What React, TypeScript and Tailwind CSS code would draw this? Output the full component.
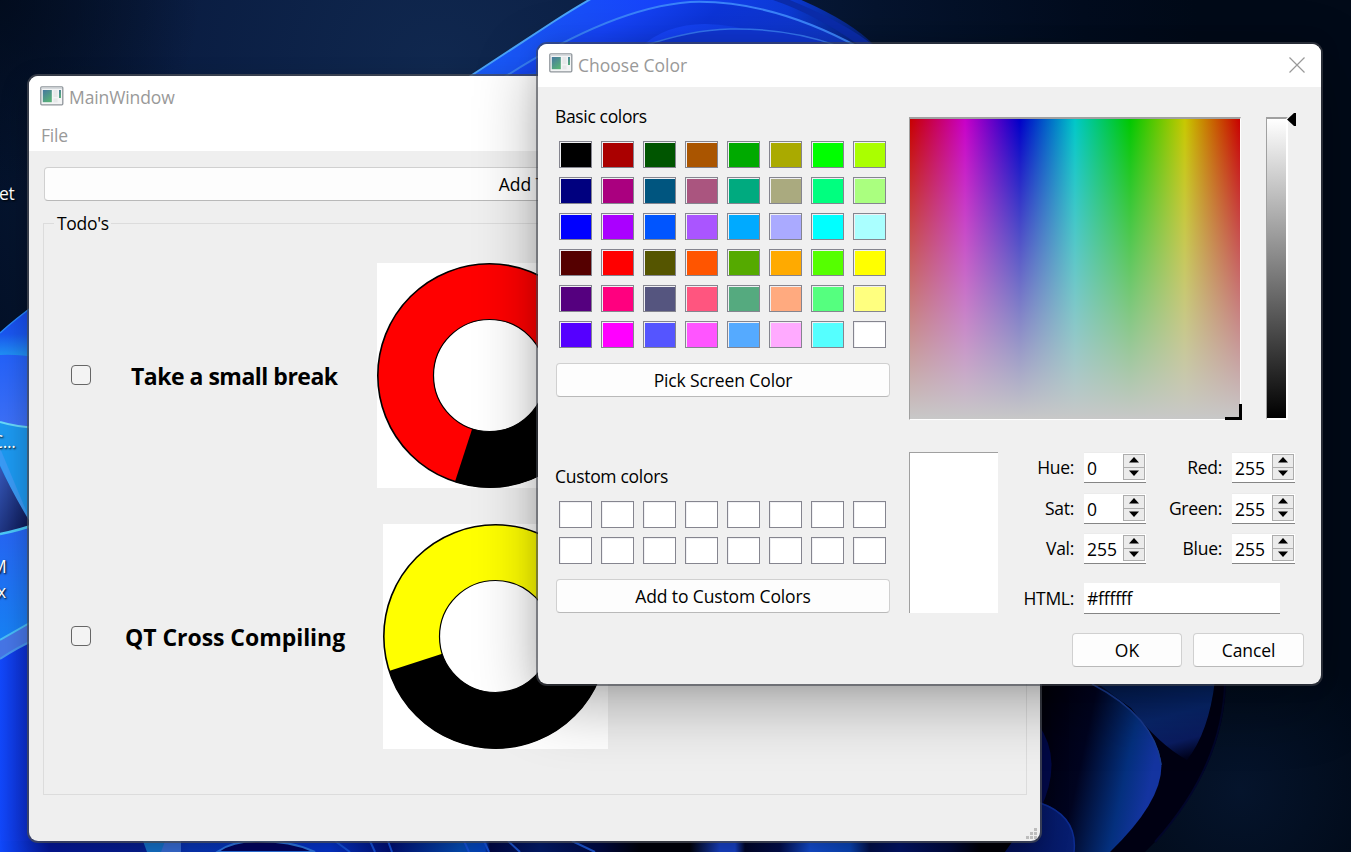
import type { ReactNode } from 'react';

const basicColors: string[][] = [
  ['#000000', '#aa0000', '#005500', '#aa5500', '#00aa00', '#aaaa00', '#00ff00', '#aaff00'],
  ['#00007f', '#aa007f', '#00557f', '#aa557f', '#00aa7f', '#aaaa7f', '#00ff7f', '#aaff7f'],
  ['#0000ff', '#aa00ff', '#0055ff', '#aa55ff', '#00aaff', '#aaaaff', '#00ffff', '#aaffff'],
  ['#550000', '#ff0000', '#555500', '#ff5500', '#55aa00', '#ffaa00', '#55ff00', '#ffff00'],
  ['#55007f', '#ff007f', '#55557f', '#ff557f', '#55aa7f', '#ffaa7f', '#55ff7f', '#ffff7f'],
  ['#5500ff', '#ff00ff', '#5555ff', '#ff55ff', '#55aaff', '#ffaaff', '#55ffff', '#ffffff'],
];
const customColors: string[][] = [Array(8).fill('#ffffff'), Array(8).fill('#ffffff')];

function Wallpaper() {
  return (
    <svg className="absolute inset-0" width="1351" height="852" viewBox="0 0 1351 852">
      <defs>
        <radialGradient id="sky" gradientUnits="userSpaceOnUse" cx="440" cy="70" r="760">
          <stop offset="0" stopColor="#10284f" />
          <stop offset="0.35" stopColor="#0a1d42" />
          <stop offset="0.58" stopColor="#05142e" />
          <stop offset="0.85" stopColor="#020c1e" />
          <stop offset="1" stopColor="#010a18" />
        </radialGradient>
        <radialGradient id="corner" gradientUnits="userSpaceOnUse" cx="0" cy="0" r="200">
          <stop offset="0" stopColor="#010a1a" stopOpacity="0.8" />
          <stop offset="1" stopColor="#010a1a" stopOpacity="0" />
        </radialGradient>
        <radialGradient id="glow" gradientUnits="userSpaceOnUse" cx="1240" cy="790" r="150">
          <stop offset="0" stopColor="#05142c" />
          <stop offset="1" stopColor="#05142c" stopOpacity="0" />
        </radialGradient>
        <linearGradient id="arc" x1="0" y1="0" x2="1" y2="0">
          <stop offset="0" stopColor="#1a60f8" />
          <stop offset="0.5" stopColor="#1744fb" />
          <stop offset="0.8" stopColor="#0c3ad6" />
          <stop offset="1" stopColor="#06206c" />
        </linearGradient>
        <linearGradient id="arc2" x1="0" y1="0" x2="1" y2="0.2">
          <stop offset="0" stopColor="#1a58fa" />
          <stop offset="0.35" stopColor="#1644fa" />
          <stop offset="0.6" stopColor="#0c34d8" />
          <stop offset="1" stopColor="#1038c8" />
        </linearGradient>
        <linearGradient id="left1" x1="0" y1="0" x2="0" y2="1">
          <stop offset="0" stopColor="#1745ec" />
          <stop offset="0.06" stopColor="#1a56ee" />
          <stop offset="0.1" stopColor="#2092f4" />
          <stop offset="1" stopColor="#2092f4" />
        </linearGradient>
        <linearGradient id="left2" x1="0" y1="0" x2="0" y2="1">
          <stop offset="0" stopColor="#2461f8" />
          <stop offset="1" stopColor="#3e70f5" />
        </linearGradient>
        <linearGradient id="left3" x1="0" y1="0" x2="1" y2="1">
          <stop offset="0" stopColor="#3658b8" />
          <stop offset="1" stopColor="#071048" />
        </linearGradient>
        <linearGradient id="left4" x1="0" y1="0" x2="0" y2="1">
          <stop offset="0" stopColor="#2763f2" />
          <stop offset="1" stopColor="#1781f4" />
        </linearGradient>
        <linearGradient id="left5" x1="0" y1="0" x2="1" y2="0">
          <stop offset="0" stopColor="#1248fa" />
          <stop offset="1" stopColor="#0a22b8" />
        </linearGradient>
        <linearGradient id="petalA" x1="0" y1="0" x2="1" y2="0.3">
          <stop offset="0" stopColor="#000008" />
          <stop offset="0.45" stopColor="#010420" />
          <stop offset="0.8" stopColor="#04307e" />
          <stop offset="1" stopColor="#1434a0" />
        </linearGradient>
        <linearGradient id="petalB" x1="0.3" y1="0" x2="0.7" y2="1">
          <stop offset="0" stopColor="#031c50" />
          <stop offset="0.5" stopColor="#08266c" />
          <stop offset="0.8" stopColor="#0a1c60" />
          <stop offset="1" stopColor="#01031c" />
        </linearGradient>
        <linearGradient id="petalC" x1="0" y1="0" x2="1" y2="0">
          <stop offset="0" stopColor="#02105a" />
          <stop offset="1" stopColor="#071e70" />
        </linearGradient>
        <linearGradient id="floor" gradientUnits="userSpaceOnUse" x1="0" y1="0" x2="1000" y2="0">
          <stop offset="0" stopColor="#1048fa" />
          <stop offset="0.05" stopColor="#0518a0" />
          <stop offset="0.14" stopColor="#06209a" />
          <stop offset="0.19" stopColor="#0838c0" />
          <stop offset="0.33" stopColor="#0536d8" />
          <stop offset="0.39" stopColor="#01107a" />
          <stop offset="0.46" stopColor="#0450c0" />
          <stop offset="0.485" stopColor="#0448d0" />
          <stop offset="0.49" stopColor="#01084a" />
          <stop offset="0.54" stopColor="#021c70" />
          <stop offset="0.6" stopColor="#010a48" />
          <stop offset="0.64" stopColor="#00020c" />
          <stop offset="0.69" stopColor="#00020c" />
          <stop offset="0.72" stopColor="#1844d0" />
          <stop offset="0.735" stopColor="#1844d0" />
          <stop offset="0.745" stopColor="#01062c" />
          <stop offset="0.78" stopColor="#020e50" />
          <stop offset="0.81" stopColor="#1450dc" />
          <stop offset="0.85" stopColor="#0a48c0" />
          <stop offset="0.87" stopColor="#02104c" />
          <stop offset="0.9" stopColor="#02146c" />
          <stop offset="0.95" stopColor="#010a40" />
          <stop offset="0.98" stopColor="#000008" />
          <stop offset="1" stopColor="#000008" />
        </linearGradient>
      </defs>
      <rect width="1351" height="852" fill="url(#sky)" />
      <rect width="200" height="200" fill="url(#corner)" />
      <rect x="1040" y="640" width="311" height="212" fill="url(#glow)" />
      <path d="M440 96 L553 22 Q578 6 596 -4 H792 Q850 20 875 46 V96Z" fill="url(#arc)" />
      <path d="M440 96 L553 22 Q578 6 596 -4" fill="none" stroke="#4aa4fa" strokeWidth="2" />
      <path d="M500 80 Q610 8 686 2 Q770 -4 860 48 H800 Q690 0 640 48Z" fill="url(#arc2)" />
      <path d="M500 80 Q610 8 690 2 Q770 -1 860 48" fill="none" stroke="#3a83fa" strokeWidth="2" />
      <path d="M644 46 Q690 30 730 29 Q790 28 838 46Z" fill="#1036d4" stroke="#3475f0" strokeWidth="1.5" />
      <path d="M780 -4 Q845 22 874 46 H860 Q810 10 760 -4Z" fill="#0b2cab" />
      <path d="M0 333 Q14 320 40 301 V852 H0Z" fill="url(#left1)" />
      <path d="M0 333 Q14 320 40 301" fill="none" stroke="#2888fa" strokeWidth="1.5" />
      <path d="M0 355 Q18 354 40 358 V430 H0Z" fill="url(#left2)" />
      <path d="M0 422 Q16 427 40 428 V545 H0Z" fill="#1c98ef" />
      <path d="M0 422 Q16 427 40 428" fill="none" stroke="#68d8f8" strokeWidth="2" />
      <path d="M0 448 L30 520 V530 L0 465Z" fill="#3a9af4" />
      <path d="M0 466 Q12 492 30 522 V530 L0 538Z" fill="url(#left3)" />
      <path d="M0 534 Q17 531 40 523 V640 H0Z" fill="url(#left4)" />
      <path d="M0 534 Q17 531 40 523" fill="none" stroke="#4bc7f6" strokeWidth="2.5" />
      <path d="M0 640 L40 617 V852 H0Z" fill="#4675e5" />
      <path d="M0 640 L40 617" stroke="#48bdf5" strokeWidth="2" />
      <path d="M0 659 Q16 648 40 637 V852 H0Z" fill="url(#left5)" />
      <path d="M0 659 Q16 648 40 637" fill="none" stroke="#4795ed" strokeWidth="2" />
      <path d="M1030 680 H1226 Q1225 765 1155 842 L1145 852 H1030Z" fill="#000012" />
      <path d="M1225 680 Q1224 765 1155 842" fill="none" stroke="#02062a" strokeWidth="2" />
      <path d="M1092 680 H1215 Q1209 732 1187 760 Q1158 744 1131 708Z" fill="url(#petalB)" />
      <path d="M1038 680 H1092 Q1152 718 1161 760 Q1166 798 1110 852 H1038Z" fill="url(#petalA)" />
      <path d="M1092 684 Q1155 717 1161 765" fill="none" stroke="#183b91" strokeWidth="1.5" />
      <path d="M1038 724 Q1064 760 1040 810Z" fill="#02094a" />
      <rect y="841" width="1040" height="11" fill="url(#floor)" />
      <path d="M1005 852 L1040 802 Q1078 815 1074 852Z" fill="url(#petalC)" />
      <path d="M1040 803 Q1078 816 1074 852" fill="none" stroke="#0c2b8e" strokeWidth="1.5" />
      <path d="M143 841 H181 V852 H147Z" fill="#1577d4" />
      <path d="M165 841 H181 V852 H161Z" fill="#3a72e0" />
      <path d="M217 852 Q232 841 258 841 Q292 841 315 852Z" fill="#020466" stroke="#2f7cf0" strokeWidth="2" />
      <path d="M335 841 L350 852 M370 841 L375 852 M388 841 L392 852 M464 841 L469 852 M484 841 L489 852" stroke="#1756e8" strokeWidth="2" />
      <path d="M508 841 L520 852 M572 841 L595 852" stroke="#1f5ce0" strokeWidth="2" />
    </svg>
  );
}

function AppIcon() {
  return (
    <svg width="24" height="20" viewBox="0 0 24 20" className="mb-[3px] shrink-0">
      <defs>
        <linearGradient id="pane" x1="0" y1="0" x2="0.6" y2="1">
          <stop offset="0" stopColor="#4777a0" />
          <stop offset="1" stopColor="#57b078" />
        </linearGradient>
      </defs>
      <rect x="0.8" y="0.8" width="22" height="18" rx="1" fill="#f3f4f5" stroke="#8f959b" strokeWidth="1.3" />
      <path d="M1.5 2.2H22" stroke="#d3d7db" strokeWidth="1.4" />
      <rect x="2.8" y="4" width="9" height="12.2" fill="url(#pane)" />
      <rect x="13.4" y="4" width="4.2" height="7" fill="#e6e8e9" />
      <rect x="13.4" y="12.4" width="4.2" height="4" fill="#e6e8e9" />
      <rect x="19" y="4" width="2" height="8" fill="url(#pane)" />
    </svg>
  );
}

function PushButton({ className, children }: { className: string; children: ReactNode }) {
  return (
    <button
      className={`flex h-[34px] items-center justify-center rounded-[4px] border border-[#d0d0d0] border-b-[#b9b9b9] bg-[#fdfdfd] pb-px text-black ${className}`}
    >
      {children}
    </button>
  );
}

function Donut({ color, end }: { color: string; end: number }) {
  const a = (end * Math.PI) / 180;
  const x = 112.5 + 112 * Math.sin(a);
  const y = 112.5 - 112 * Math.cos(a);
  return (
    <svg width="225" height="225" viewBox="0 0 225 225" className="block shrink-0 bg-white">
      <circle cx="112.5" cy="112.5" r="111.7" fill={color} stroke="#000" strokeWidth="1.6" />
      <path d={`M112.5 112.5 L224.5 112.5 A112 112 0 0 1 ${x} ${y}Z`} fill="#000" />
      <circle cx="112.5" cy="112.5" r="56" fill="#fff" stroke="#000" strokeWidth="1.2" />
    </svg>
  );
}

function TodoRow({ label, labelClass, color, end }: { label: string; labelClass: string; color: string; end: number }) {
  return (
    <div className="flex h-[225px] items-center">
      <span className="mb-px ml-[27px] size-5 shrink-0 rounded-[4px] border border-[#666] bg-[#f3f3f3]" />
      <span className={`shrink-0 whitespace-nowrap text-[23px] font-bold text-black ${labelClass}`}>{label}</span>
      <Donut color={color} end={end} />
    </div>
  );
}

function MainWindow() {
  return (
    <section className="absolute left-[29px] top-[76px] flex h-[765px] w-[1011px] flex-col rounded-[9px] bg-[#efefef] shadow-[0_0_0_2px_rgba(72,76,86,0.75),0_10px_28px_rgba(0,0,0,0.3)]">
      <header className="flex h-[42px] items-center rounded-t-[9px] bg-white pl-[11px] text-[#999]">
        <AppIcon />
        <span className="ml-[5px] tracking-[-0.1px]">MainWindow</span>
      </header>
      <nav className="flex h-[33px] items-center bg-white pl-3 tracking-[-0.2px] text-[#999]">File</nav>
      <div className="pl-[15px] pr-[13px] pt-4">
        <PushButton className="w-full pl-[5px]">Add Todo</PushButton>
      </div>
      <fieldset className="ml-[14px] mr-[13px] mt-[9px] h-[585px] border border-[#dcdcdc]">
        <legend className="ml-[10px] h-[27px] pl-[3px] pr-0.5 leading-[27px] tracking-[-0.3px] text-black">Todo's</legend>
        <div className="flex flex-col gap-9 pt-[26px]">
          <TodoRow label="Take a small break" labelClass="ml-10 w-[246px] tracking-[-0.5px]" color="#ff0000" end={198} />
          <TodoRow label="QT Cross Compiling" labelClass="ml-[34px] w-[258px] tracking-[-0.05px]" color="#ffff00" end={252} />
        </div>
      </fieldset>
      <svg width="12" height="12" viewBox="0 0 12 12" className="ml-auto mr-0.5 mt-auto mb-px" fill="#bdbdbd">
        <path d="M8 0h3v3h-3zM4 4h3v3h-3zM8 4h3v3h-3zM0 8h3v3h-3zM4 8h3v3h-3zM8 8h3v3h-3z" />
      </svg>
    </section>
  );
}

function SwatchGrid({ rows }: { rows: string[][] }) {
  return (
    <div className="ml-1 grid w-[327px] grid-cols-8 gap-[9px]">
      {rows.flat().map((c, i) => (
        <div key={i} className="h-[27px] w-[33px] border border-[#85858f] bg-[#f0f0f3] pl-px pt-px">
          <div className="h-full w-full" style={{ backgroundColor: c }} />
        </div>
      ))}
    </div>
  );
}

function SpinBox({ value, wide }: { value: string; wide?: boolean }) {
  return (
    <div
      className={`ml-[10px] flex h-[31px] justify-between border-b border-t border-b-[#858585] border-t-[#ebebeb] bg-white pl-[3px] pr-px pt-px text-left ${wide ? 'w-[63px]' : 'w-[62px]'}`}
    >
      <span className="leading-[29px]">{value}</span>
      <svg width="22" height="26" viewBox="0 0 22 26" className="shrink-0">
        <rect x="0.5" y="0.5" width="21" height="25" fill="#ebebeb" stroke="#adadad" />
        <path d="M0 13.5H22" stroke="#adadad" />
        <path d="M6 8.500 L11 3 L16 8.500Z" fill="#000" />
        <path d="M6 16.500 H16 L11 22Z" fill="#000" />
      </svg>
    </div>
  );
}

function FieldLabel({ children }: { children: ReactNode }) {
  return <label className="whitespace-nowrap text-right leading-[31px] tracking-[-0.3px]">{children}</label>;
}

function ColorField() {
  return (
    <div className="relative h-[303px] w-[332px] border-b border-l border-r border-t-2 border-b-white border-l-[#a0a0a0] border-r-white border-t-[#a0a0a0]">
      <div className="h-full w-full bg-[linear-gradient(to_bottom,rgba(200,200,200,0),rgb(200,200,200)),linear-gradient(to_right,#c80000,#c800c8_16.7%,#0000c8_33.3%,#00c8c8_50%,#00c800_66.7%,#c8c800_83.3%,#c80000)]" />
      <div className="absolute -bottom-px -right-0.5 h-4 w-[17px] border-b-[3px] border-r-[3px] border-black" />
    </div>
  );
}

function ColorDialog() {
  return (
    <section className="absolute left-[538px] top-[44px] flex h-[640px] w-[783px] flex-col rounded-[9px] bg-[#f0f0f0] text-black shadow-[0_0_0_2px_rgba(66,70,78,0.6),0_20px_64px_rgba(0,0,0,0.32),0_0_22px_rgba(0,0,0,0.1)]">
      <header className="flex h-[43px] items-center rounded-t-[9px] bg-white pb-0.5 pl-[11px] pr-4 text-[#999]">
        <AppIcon />
        <span className="ml-[5px] pt-px">Choose Color</span>
        <svg width="16" height="16" viewBox="0 0 16 16" className="ml-auto" stroke="#999" strokeWidth="1.2">
          <path d="M0.500 0.500 L15.500 15.500 M15.500 0.500 L0.500 15.500" />
        </svg>
      </header>
      <div className="flex flex-1">
        <div className="ml-[17px] flex w-[336px] flex-col pt-4">
          <h2 className="h-[38px] leading-[26px] tracking-[-0.35px]">Basic colors</h2>
          <SwatchGrid rows={basicColors} />
          <PushButton className="ml-px mt-[15px] w-[334px] tracking-[-0.12px]">Pick Screen Color</PushButton>
          <h2 className="mt-[66px] h-[38px] leading-[26px] tracking-[-0.3px]">Custom colors</h2>
          <SwatchGrid rows={customColors} />
          <PushButton className="ml-px mt-[15px] w-[334px] tracking-[-0.12px]">Add to Custom Colors</PushButton>
        </div>
        <div className="ml-[18px] flex w-[395px] flex-col pt-[30px]">
          <div className="flex">
            <ColorField />
            <div className="relative ml-[25px] flex h-[303px] w-[22px] flex-col border-b-2 border-l border-r-2 border-t-2 border-b-white border-l-[#a0a0a0] border-r-white border-t-[#a0a0a0]">
              <div className="flex-1 bg-[linear-gradient(to_bottom,#fff,#000)]" />
              <svg width="9" height="13" viewBox="0 0 9 13" className="absolute -right-[10px] -top-[6px]">
                <path d="M9 0 V13 H7 L0 6.500 L7 0Z" fill="#000" />
              </svg>
            </div>
          </div>
          <div className="mt-8 flex">
            <div className="h-[161px] w-[89px] shrink-0 border-l border-t border-[#a0a0a0] bg-white" />
            <div className="flex flex-col">
              <div className="grid grid-cols-[76px_72px_76px_73px] gap-y-[9.500px]">
                <FieldLabel>Hue:</FieldLabel>
                <SpinBox value="0" />
                <FieldLabel>Red:</FieldLabel>
                <SpinBox value="255" wide />
                <FieldLabel>Sat:</FieldLabel>
                <SpinBox value="0" />
                <FieldLabel>Green:</FieldLabel>
                <SpinBox value="255" wide />
                <FieldLabel>Val:</FieldLabel>
                <SpinBox value="255" />
                <FieldLabel>Blue:</FieldLabel>
                <SpinBox value="255" wide />
              </div>
              <div className="mt-[19px] grid grid-cols-[76px_206px]">
                <FieldLabel>HTML:</FieldLabel>
                <div className="ml-[10px] h-[31px] border-b border-[#858585] bg-white pl-[3px] leading-[31px] tracking-[-0.2px]">#ffffff</div>
              </div>
            </div>
          </div>
          <div className="mt-[19px] flex justify-end gap-[11px]">
            <PushButton className="w-[110px]">OK</PushButton>
            <PushButton className="w-[111px] tracking-[-0.1px]">Cancel</PushButton>
          </div>
        </div>
      </div>
    </section>
  );
}

export default function App() {
  return (
    <main className="relative h-[852px] w-[1351px] overflow-hidden bg-[#020c20] font-['Open_Sans','Noto_Sans',sans-serif] text-[17.500px] leading-6">
      <Wallpaper />
      <div className="absolute left-0 top-0 h-full w-[28px] overflow-hidden text-white [text-shadow:1px_1px_2px_#000]">
        <span className="absolute -left-px top-[181px] tracking-[-0.3px]">et</span>
        <span className="absolute -left-[8px] top-[429px] tracking-[-0.3px]">C...</span>
        <span className="absolute -left-[9px] top-[554px]">M</span>
        <span className="absolute -left-[3px] top-[579px]">x</span>
      </div>
      <MainWindow />
      <ColorDialog />
    </main>
  );
}
